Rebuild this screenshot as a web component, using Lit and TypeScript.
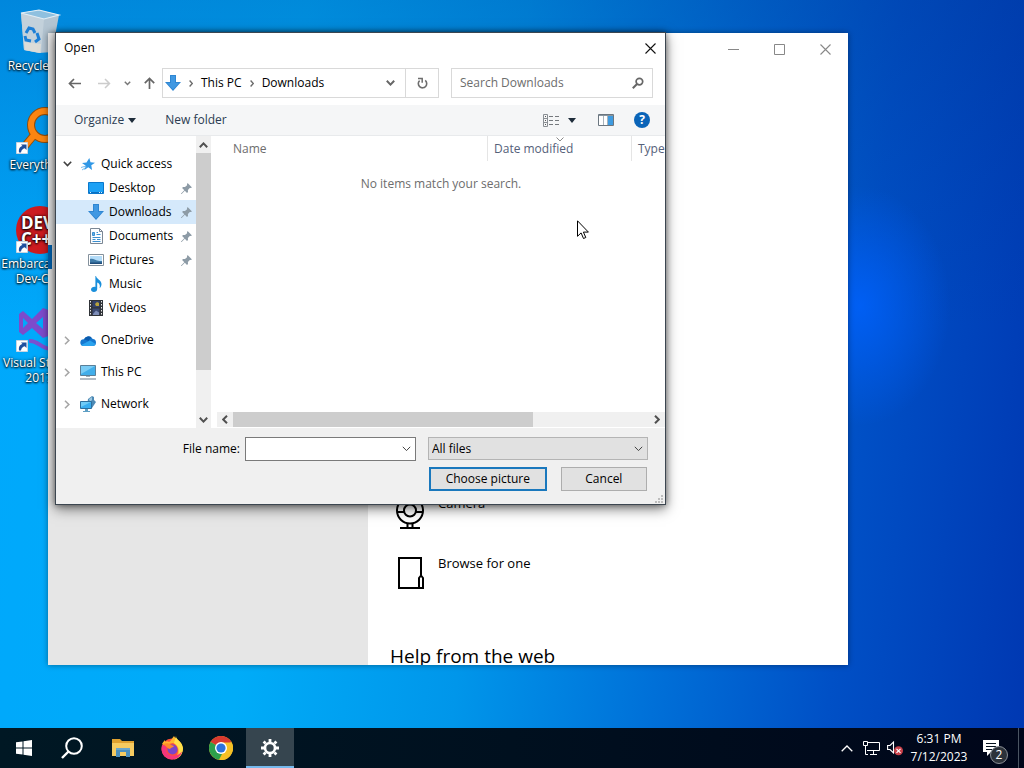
import { LitElement, html, svg, css, nothing, TemplateResult } from "lit";
import { customElement, property } from "lit/decorators.js";
import { classMap } from "lit/directives/class-map.js";

const icon = (w: number, h: number, body: TemplateResult, label = "") => html`<svg
  width=${w} height=${h} viewBox="0 0 ${w} ${h}" role=${label ? "img" : "presentation"}
  aria-label=${label || nothing} fill="none">${body}</svg>`;

/* ---- small glyphs ---- */
const chevDown = (c = "#555", s = 2) => icon(9, 6, svg`<path d="M.8 .8 4.5 4.6 8.2 .8" stroke=${c} stroke-width=${s}/>`);
const chevUp = () => icon(9, 6, svg`<path d="M.8 5.2 4.5 1.4 8.2 5.2" stroke="#505050" stroke-width="2"/>`);
const chevRight = (c = "#a6a6a6", s = 1.6) => icon(6, 9, svg`<path d="M1 .8 4.8 4.5 1 8.2" stroke=${c} stroke-width=${s}/>`);
const chevLeft = () => icon(6, 9, svg`<path d="M5 .8 1.2 4.5 5 8.2" stroke="#505050" stroke-width="2"/>`);
const crumb = () => icon(4, 7, svg`<path d="M.6 .6 3.3 3.5 .6 6.4" stroke="#6b6b6b" stroke-width="1.4"/>`);
const caret = () => icon(8, 5, svg`<path d="M0 0h8L4 5z" fill="#1e2c3a"/>`);
const closeX = (c: string) => icon(11, 11, svg`<path d="M.5 .5 10.5 10.5M10.5 .5 .5 10.5" stroke=${c} stroke-width="1.1"/>`);
const backArrow = (c: string) => icon(13, 11, svg`<path d="M13 5.5H1.6M6 1 1.5 5.5 6 10" stroke=${c} stroke-width="1.7"/>`);
const fwdArrow = (c: string) => icon(13, 11, svg`<path d="M0 5.5h11.4M7 1l4.5 4.5L7 10" stroke=${c} stroke-width="1.5"/>`);
const upArrow = () => icon(11, 12, svg`<path d="M5.5 12V1.6M.8 6.2 5.5 1.5l4.7 4.7" stroke="#666" stroke-width="1.7"/>`);
const refresh = () => icon(11, 12, svg`<path d="M8.2 3.4A4.200 4.200 0 1 1 2.600 3.600" stroke="#6d6d6d" stroke-width="1.600"/><path d="M1 1.500h4.200v4.200" stroke="#6d6d6d" stroke-width="1.500"/>`);
const magnify = () => icon(12, 12, svg`<circle cx="7.4" cy="4.6" r="3.3" stroke="#666" stroke-width="1.7"/><path d="M5 7 .8 11.2" stroke="#666" stroke-width="2"/>`);
const pin = () => icon(11, 11, svg`<path d="M6.6 0 11 4.4 9.6 5 8.8 4.9 6.9 7l.1 2-1 .9L3.800 7.700 .6 10.900 0 11 .1 10.400 3.300 7.200 1.100 5l.9-1 2 .1L6.100 2.200 6 1.300z" fill="#8d9ba6"/>`);
const details = () => icon(16, 13, svg`<path d="M.5 .5h4v12h-4zM.5 4.500h4M.5 8.500h4" stroke="#8a8f94"/><path d="M2 2.500h1M2 6.500h1M2 10.500h1" stroke="#555"/><path d="M6 2.500h4M12 2.500h4M6 6.500h4M12 6.500h4M6 10.500h4M12 10.500h4" stroke="#75797d"/>`);
const preview = () => icon(16, 12, svg`<path d="M.5 .5h15v11H.5z" fill="#fff" stroke="#6b7680"/><path d="M1 1h14v1H1z" fill="#8a969f"/><path d="M10 2h5v9h-5z" fill="#3f9be0"/><path d="M5.500 2v9M9.500 2v9" stroke="#a9b4bd"/>`);
const help = () => html`<span class="help">?</span>`;

/* ---- navigation tree icons ---- */
const star = () => icon(14, 13, svg`<path d="m8.300 0 1.200 4.200L14 4.700l-3.700 2.600L11 12 7.300 9.300 3.300 12l1.200-4.400L1 5l4.500-.5z" fill="#2f97e6"/><path d="M0 9.500 5 8M1 12l4.500-3" stroke="#77bdf0"/>`);
const desktopI = () => icon(16, 12, svg`<path d="M.5 .5h15v11H.5z" fill="#1da1f5" stroke="#0a78cc"/><path d="M1 10.500h14" stroke="#0b6fc0"/><path d="M2 10.500h1M11 10.500h1M13 10.500h1" stroke="#d9f0ff"/>`);
const download = () => icon(16, 16, svg`<path d="M5 0h6v7h5l-8 9-8-9h5z" fill="#2f86d2"/><path d="M6 1h4v7h4l-6 6.500L2 8h4z" fill="#4098e2"/>`);
const documentI = () => icon(13, 16, svg`<path d="M.5 .5h9l3 3v12H.5z" fill="#fbfdff" stroke="#7b8794"/><path d="M9.500 .5v3h3" stroke="#7b8794"/><path d="M6.500 4.500H8M6.500 6.500h4M2.500 9.500h8M2.500 11.500h3M7 11.500h3.500M2.500 13.500h8" stroke="#3a8fd0"/><path d="M2.500 7.500V4.500h2v3z" fill="#5fb0e8" stroke="#3a8fd0"/>`);
const pictureI = () => icon(16, 12, svg`<path d="M.5 .5h15v11H.5z" fill="#fff" stroke="#84919c"/><path d="M2 2h12v8H2z" fill="#b4dcf8"/><path d="M2 5c3-1 5 1 7 1.500s3 .5 5 .5v3H2z" fill="#3f7ba8"/><path d="M2 8.500h12V10H2z" fill="#1f4c7a"/>`);
const music = () => icon(11, 16, svg`<path d="M5 0c.4 3 5.500 4.200 5.500 8 0 2-.8 3.200-1.900 4.300.9-3.300-.3-5-2.400-5.800V13c0 1.700-1.400 3-3.300 3C1.200 16 0 15 0 13.600c0-1.700 2-3.100 4.400-2.700V0z" fill="#1a8fdb"/>`);
const video = () => icon(14, 16, svg`<path d="M0 0h14v16H0z" fill="#303338"/><path d="M1.500 1v15M12.500 1v15" stroke="#e6e6e6" stroke-dasharray="1.500 1.500"/><path d="M3.500 1h7v6.300h-7z" fill="#34416b"/><path d="M3.500 8.500h7V15h-7z" fill="#3c4a73"/><path d="m6 4 2-2 2 1v3H7z" fill="#b8a23a"/><path d="m4 14 3-3.500 3 2V15H4z" fill="#7d8db8"/>`);
const oneDrive = () => icon(16, 11, svg`<path d="M4 4.200A5 5 0 0 1 12.800 4 3.500 3.500 0 0 1 16 7.500 3.500 3.500 0 0 1 12.500 11H3.500A3.400 3.400 0 0 1 4 4.200z" fill="#1578d0"/><path d="M4 4.200A5 5 0 0 1 11.500 2.300L8.500 6z" fill="#0b5cae"/><path d="M1.200 10 10 5.500l5.600 3.600A3.500 3.500 0 0 1 12.500 11H3.500c-1 0-1.800-.4-2.300-1z" fill="#2aa3ee"/>`);
const pc = () => icon(16, 15, svg`<path d="M.5 .5h15v10H.5z" fill="#41aeea" stroke="#5a7f98"/><path d="M1 1h14L1 9z" fill="#7accf5"/><path d="M6 11h4v1H6z" fill="#9fb0bb"/><path d="M0 14h16" stroke="#9aa6b0" stroke-width="1.500"/>`);
const network = () => icon(16, 16, svg`<path d="m8 3 4-3 2 1v3l2 2-2 3-2 3-5-2z" fill="#4d89b4"/><path d="m9 3 3-2v3l-2 2z" fill="#9cc7e0"/><path d="M.5 5.500h11v7H.5z" fill="#39aef0" stroke="#2e6f9d"/><path d="M1 6h10L1 11z" fill="#6fcbf7"/><path d="M5 13h3v2H5zM3 15h7v1H3z" fill="#5e9fc4"/>`);

/* ---- settings page ---- */
const camera = () => icon(28, 34, svg`<circle cx="14" cy="14.500" r="13" stroke="#000" stroke-width="2"/><circle cx="14" cy="14.500" r="6" stroke="#000" stroke-width="2"/><path d="M1 16h7M20 16h7M4 32h20M11.500 27v5M16.500 27v5" stroke="#000" stroke-width="2"/>`);
const browse = () => icon(28, 34, svg`<path d="M25 19V2H3v30h20" stroke="#000" stroke-width="2"/><path d="M23 32V22l2-2.500 2 2.500v10z" stroke="#000" stroke-width="2"/>`);

/* ---- desktop ---- */
const shortcut = svg`<path d="M1.500 35.500h11v11h-11z" fill="#fff" stroke="#c8d4e0"/><path d="M4 45.500c-.5-4 1-6 3.500-6.500L6 37.500h5.500V43l-1.700-1.700C7.500 42 6.500 43 6 45.500z" fill="#1f4f9e"/>`;
const bin = () => icon(48, 48, svg`<path d="M6 5 24 2l20 5-7 37-13 1-15-3z" fill="#b4c5d2"/><path d="M6 5 24 2l20 5-15 4z" fill="#8fc0df"/><path d="m6 5 23 6-3 34-17-3z" fill="#c3d1db"/><path d="m6 5 23 6 15-4L24 2z" stroke="#e2eef6" stroke-width="1.200"/><path d="m9 34 17 2-.8 9L10 42z" fill="#dcdcd8"/><path d="m11 25 3-5 4 1 2 4M22 25l2 6-4 3M16 33l-5-1-1-4" stroke="#1c7fd6" stroke-width="3"/>`);
const everything = () => icon(48, 48, svg`<circle cx="30" cy="18" r="14" stroke="#8f4d0c" stroke-width="8"/><path d="M19 28 10 39" stroke="#8f4d0c" stroke-width="8"/><circle cx="30" cy="18" r="14" stroke="#fb8511" stroke-width="6"/><path d="M20 27 10 39" stroke="#fb8511" stroke-width="6"/>${shortcut}`);
const devcpp = () => icon(48, 48, svg`<circle cx="25" cy="24" r="24" fill="#cc1b20"/><text x="6" y="23" fill="#fff" font-family="Open Sans, sans-serif" font-weight="700" font-size="17">DEV</text><text x="6" y="39" fill="#fff" font-family="Open Sans, sans-serif" font-weight="700" font-size="17">C++</text>${shortcut}`);
const vs = () => icon(48, 48, svg`<path fill-rule="evenodd" d="m4 9 4-3 9 8L28 3l8 3v24l-8 3-11-10-9 7-4-3zm4 4v10l5-5zm20-1-7 6 7 6z" fill="#7d4bcb"/><path d="M14 36c9-1 12 8 22 8V3" stroke="#7b4fd0" stroke-width="4"/>${shortcut}`);

/* ---- taskbar ---- */
const windows = () => icon(16, 16, svg`<path d="M0 2.300 6.500 1.400v6.100H0zM7.500 1.200 16 0v7.500H7.500zM0 8.500h6.500v6.100L0 13.700zM7.500 8.500H16V16l-8.500-1.200z" fill="#fff"/>`);
const searchT = () => icon(22, 22, svg`<circle cx="13" cy="9" r="7.800" stroke="#fff" stroke-width="2"/><path d="M7.500 14.500 1 21" stroke="#fff" stroke-width="2.400"/>`);
const explorer = () => icon(22, 18, svg`<path d="M0 0h8l2 2h12v15H0z" fill="#dfa130"/><path d="M0 4h22v13H0z" fill="#f6cb60"/><path d="M4 9h14v9h-4v-5H8v5H4z" fill="#4b8fbd"/><path d="M4 9h14v2H4z" fill="#6aa6cc"/>`);
const firefox = () => icon(24, 24, svg`<circle cx="12" cy="13" r="10.500" fill="#ff4f3a"/><path d="M2 8c1-2 2-3 3-4v2c1-1 3-1 4 0 2-1 3-4 5-6 1 3 6 4 8 9 3 8-3 14-8 14.500C20 18 19 9 13 7L4 9z" fill="#ffb52e"/><path d="M16 0c0 4 6 5 7 12 0 5-3 9-6 10 4-6 2-12-3-15z" fill="#ffe14a"/><path d="M2 9c-2 7 2 14 10 14.500 6 0 9-4 10-8-4 5-12 6-15 1-1-2-1-4 0-6z" fill="#f5357c"/><circle cx="12.500" cy="13.500" r="5" fill="#7a45c9"/><path d="M3 8c3-1 6-1 8 1l3 1c-1 2-3 1-4 3-2 0-4-3-7-5z" fill="#ff8a2a"/>`);
const chrome = () => icon(24, 24, svg`<circle cx="12" cy="12" r="12" fill="#f5c026"/><path d="M12 12 1.600 6A12 12 0 0 1 22.400 6z" fill="#d8392f"/><path d="M1.600 6 12 12l1 6-3 5.800A12 12 0 0 1 1.600 6z" fill="#2da04b"/><path d="M12 6.500h10.700A12 12 0 0 1 10.500 23.900L17 14z" fill="#f5c026"/><circle cx="12" cy="12" r="6" fill="#fff"/><circle cx="12" cy="12" r="4.600" fill="#2b72dc"/>`);
const gear = () => icon(18, 18, svg`<circle cx="9" cy="9" r="5" stroke="#fff" stroke-width="2.600"/><g stroke="#fff" stroke-width="2.800"><path d="M9 0v3M9 15v3M0 9h3M15 9h3M2.600 2.600l2 2M13.400 13.400l2 2M15.400 2.600l-2 2M4.600 13.400l-2 2"/></g>`);
const trayUp = () => icon(12, 7, svg`<path d="M.7 6.300 6 1l5.300 5.300" stroke="#fff" stroke-width="1.300"/>`);
const trayNet = () => icon(17, 14, svg`<path d="M5 1.500h11.500v8H4M10.500 9.500v4M7 13.500h7" stroke="#fff"/><path d="M.5 .5h4v4h-4zM2.500 5v8.500H5" stroke="#fff"/>`);
const trayVol = () => icon(17, 16, svg`<path d="M.6 5.500H3L6.500 2v11L3 9.500H.6z" stroke="#fff" stroke-width="1.100"/><circle cx="11.500" cy="10.800" r="4.500" fill="#c9414a"/><path d="m9.500 8.800 4 4M13.500 8.800l-4 4" stroke="#fff" stroke-width="1.200"/>`);
const note = () => icon(16, 16, svg`<path d="M0 0h16v12H8l-4 4v-4H0z" fill="#fff"/><path d="M3 3.500h10M3 6.500h10M3 9.500h6" stroke="#06121f"/>`);

const FONT = css`
  :host { font-family: "Open Sans", "Noto Sans", sans-serif; font-size: 12px; line-height: 16px; color: #000; }
  *, *::before, *::after { box-sizing: border-box; }
  svg { display: block; flex: none; }
  button, input, select { font: inherit; color: inherit; margin: 0; }
  button { border: 0; background: none; padding: 0; display: flex; align-items: center; justify-content: center; }
  h1, h2, p, ul { margin: 0; padding: 0; font-size: inherit; font-weight: 400; list-style: none; }
`;

interface Place { name: string; glyph: () => TemplateResult; depth: number; pinned?: boolean; selected?: boolean; open?: boolean; }

const PLACES: Place[] = [
  { name: "Quick access", glyph: star, depth: 0, open: true },
  { name: "Desktop", glyph: desktopI, depth: 1, pinned: true },
  { name: "Downloads", glyph: download, depth: 1, pinned: true, selected: true },
  { name: "Documents", glyph: documentI, depth: 1, pinned: true },
  { name: "Pictures", glyph: pictureI, depth: 1, pinned: true },
  { name: "Music", glyph: music, depth: 1 },
  { name: "Videos", glyph: video, depth: 1 },
  { name: "OneDrive", glyph: oneDrive, depth: 0 },
  { name: "This PC", glyph: pc, depth: 0 },
  { name: "Network", glyph: network, depth: 0 },
];

@customElement("open-dialog")
class OpenDialog extends LitElement {
  @property() folder = "Downloads";

  static styles = [FONT, css`
    :host { display: block; background: #fff; border: 1px solid #3c4650; box-shadow: 0 4px 12px rgba(0,0,0,.5), 0 0 6px rgba(0,0,0,.4); }
    .title { display: flex; align-items: center; justify-content: space-between; height: 30px; padding: 0 9px 0 8px; }
    .nav { display: flex; align-items: center; height: 42px; padding: 0 12px 2px; }
    .nav .arrows { display: flex; align-items: center; width: 94px; gap: 17px; }
    .arrows .recent { margin: 0 -4px; }
    .address { flex: 1; display: flex; height: 30px; border: 1px solid #d9d9d9; align-items: center; }
    .crumbs { flex: 1; display: flex; align-items: center; gap: 8px; padding: 0 10px 0 2px; }
    .crumbs .drop { margin-left: auto; }
    .address .reload { width: 33px; height: 28px; border-left: 1px solid #d9d9d9; }
    .search { flex: 0 1 202px; height: 30px; margin-left: 12px; border: 1px solid #d9d9d9; display: flex; align-items: center; padding: 0 8px; }
    .search input { flex: 1; min-width: 0; border: 0; padding: 0; outline: 0; background: none; }
    .search input::placeholder { color: #6d6d6d; opacity: 1; }
    .tools { display: flex; align-items: center; height: 31px; padding: 0 15px 0 18px; background: #f5f6f7; border-bottom: 1px solid #e8eaec; color: #2b3c52; }
    .tools button { gap: 4px; }
    .tools .new { margin-left: 29px; }
    .tools .view { margin-left: auto; gap: 9px; }
    .tools .pane { margin: 0 20px 0 22px; }
    .help { width: 16px; height: 16px; border-radius: 50%; background: #0a64b8; color: #fff; font-weight: 700; line-height: 16px; text-align: center; }
    .body { display: flex; }
    .tree { width: 140px; padding: 16px 0 12px; }
    .tree a { display: flex; align-items: center; height: 24px; color: inherit; text-decoration: none; white-space: nowrap; padding-right: 4px; }
    .tree li.root + li.root, .tree li.child + li.root { margin-top: 8px; }
    .tree .sel { background: #d5e9fb; }
    .twist { width: 22px; display: flex; justify-content: center; }
    .pic { width: 20px; display: flex; justify-content: center; margin-right: 3px; }
    .child .twist { width: 30px; }
    .tree .pin { margin-left: auto; }
    .vbar { width: 15px; display: flex; flex-direction: column; background: #f0f0f0; }
    .vbar button { height: 17px; }
    .vbar .track { flex: 1; }
    .vbar .thumb { height: 84%; background: #cdcdcd; }
    .files { flex: 1; min-width: 0; margin-left: 6px; display: flex; flex-direction: column; overflow: hidden; }
    table { border-collapse: separate; border-spacing: 0; table-layout: fixed; width: 100%; }
    th { font-weight: 400; text-align: left; color: #55617a; height: 25px; padding: 0 0 0 6px; border-right: 1px solid #e5e5e5; white-space: nowrap; position: relative; }
    th:first-child { width: 271px; padding-left: 16px; color: #6d6d6d; }
    th:nth-child(2) { width: 144px; }
    th:last-child { border: 0; }
    .sort { position: absolute; left: 50%; margin-left: -4px; top: 1px; }
    .empty { text-align: center; color: #6d6d6d; padding-top: 15px; flex: 1; }
    .hbar { display: flex; align-items: stretch; height: 15px; margin-bottom: 1px; background: #f0f0f0; }
    .hbar button { width: 16px; }
    .hbar .track { flex: 1; }
    .hbar .thumb { width: 72%; height: 100%; background: #cdcdcd; }
    .foot { display: grid; grid-template-columns: 1fr 171px 220px; column-gap: 12px; row-gap: 6px; background: #f0f0f0; padding: 9px 17px 13px 0; position: relative; }
    .foot label { justify-self: end; align-self: center; margin-right: -7px; }
    .combo { display: flex; align-items: center; height: 24px; border: 1px solid #7a7a7a; background: #fff; }
    .combo input { flex: 1; min-width: 0; border: 0; outline: 0; padding: 0 3px; background: none; height: 100%; }
    .combo button { width: 17px; height: 100%; }
    .pick { display: grid; height: 24px; padding-bottom: 1px; }
    .pick > * { grid-area: 1 / 1; }
    .pick select { appearance: none; border: 1px solid #b4b4b4; border-radius: 0; background: #e1e1e1; padding: 0 3px; width: 100%; }
    .pick svg { justify-self: end; align-self: center; margin-right: 5px; pointer-events: none; }
    .actions { grid-column: 3; display: flex; gap: 14px; padding: 0 1px; }
    .actions button { flex: 43 1 0; height: 24px; background: #e1e1e1; border: 1px solid #adadad; white-space: nowrap; }
    .actions .primary { flex: 58 1 0; border: 2px solid #1a78bd; }
    .grip { position: absolute; right: 2px; bottom: 1px; }
  `];

  private place(p: Place) {
    const twist = p.depth ? nothing : p.open ? chevDown("#404040", 1.6) : chevRight();
    return html`<li class=${p.depth ? "child" : "root"}>
      <a href="#" class=${classMap({ sel: !!p.selected })}>
        <span class="twist">${twist}</span><span class="pic">${p.glyph()}</span>${p.name}
        ${p.pinned ? html`<span class="pin">${pin()}</span>` : nothing}
      </a></li>`;
  }

  render() {
    const dots = [[8, 0], [8, 3], [8, 6], [5, 3], [5, 6], [2, 6]];
    return html`
      <div class="title"><h1>Open</h1><button aria-label="Close">${closeX("#111")}</button></div>
      <div class="nav">
        <div class="arrows">
          <button aria-label="Back">${backArrow("#666")}</button>
          <button aria-label="Forward">${fwdArrow("#ccc")}</button>
          <button class="recent" aria-label="Recent locations">${icon(7, 5, svg`<path d="M.8 .8 3.500 3.500 6.200 .8" stroke="#777" stroke-width="1.500"/>`)}</button>
          <button aria-label="Up">${upArrow()}</button>
        </div>
        <div class="address">
          <div class="crumbs">${download()}${crumb()}<span>This PC</span>${crumb()}<span>${this.folder}</span>
            <button class="drop" aria-label="Previous locations">${chevDown("#666")}</button></div>
          <button class="reload" aria-label="Refresh">${refresh()}</button>
        </div>
        <div class="search"><input type="search" aria-label="Search" placeholder="Search ${this.folder}">${magnify()}</div>
      </div>
      <div class="tools">
        <button>Organize ${caret()}</button>
        <button class="new">New folder</button>
        <button class="view" aria-label="Change your view">${details()}${caret()}</button>
        <button class="pane" aria-label="Preview pane">${preview()}</button>
        <button aria-label="Help">${help()}</button>
      </div>
      <div class="body">
        <ul class="tree">${PLACES.map((p) => this.place(p))}</ul>
        <div class="vbar">
          <button aria-label="Scroll up">${chevUp()}</button>
          <div class="track"><div class="thumb"></div></div>
          <button aria-label="Scroll down">${chevDown("#505050")}</button>
        </div>
        <div class="files">
          <table><thead><tr><th>Name</th>
            <th><span class="sort">${icon(8, 5, svg`<path d="M.5 .5 4 4 7.500 .5" stroke="#8a8a8a"/>`)}</span>Date modified</th>
            <th>Type</th></tr></thead></table>
          <p class="empty">No items match your search.</p>
          <div class="hbar">
            <button aria-label="Scroll left">${chevLeft()}</button>
            <div class="track"><div class="thumb"></div></div>
            <button aria-label="Scroll right">${chevRight("#505050", 2)}</button>
          </div>
        </div>
      </div>
      <div class="foot">
        <label for="file">File name:</label>
        <div class="combo"><input id="file" type="text"><button aria-label="Recent files">${chevDown("#444", 1)}</button></div>
        <div class="pick"><select aria-label="File type"><option>All files</option></select>${chevDown("#444", 1)}</div>
        <div class="actions"><button class="primary">Choose picture</button><button>Cancel</button></div>
        <span class="grip">${icon(10, 8, svg`${dots.map(([x, y]) => svg`<rect x=${x} y=${y} width="2" height="2" fill="#bdbdbd"/>`)}`)}</span>
      </div>`;
  }
}

@customElement("settings-window")
class SettingsWindow extends LitElement {
  static styles = [FONT, css`
    :host { display: flex; background: #fff; overflow: hidden; box-shadow: 0 0 6px rgba(0,0,0,.4); }
    .side { flex: 0 0 40%; background: #e6e6e6; padding-top: 212px; }
    .mark { width: 4px; height: 24px; background: #0063b1; }
    .main { flex: 1; display: flex; flex-direction: column; }
    .caption { display: flex; justify-content: flex-end; height: 32px; }
    .caption button { width: 46px; }
    .page { flex: 1; display: flex; flex-direction: column; justify-content: flex-end; padding-left: 22px; }
    .opt { display: flex; align-items: flex-start; gap: 14px; height: 60px; padding-left: 6px; font-size: 13px; line-height: 18px; justify-content: flex-start; }
    .opt svg { margin-top: 2px; }
    h2 { font-size: 19px; line-height: 24px; margin-top: 30px; height: 21px; }
  `];
  render() {
    return html`
      <div class="side"><div class="mark"></div></div>
      <div class="main">
        <div class="caption">
          <button aria-label="Minimize">${icon(11, 11, svg`<path d="M0 5.500h11" stroke="#888"/>`)}</button>
          <button aria-label="Maximize">${icon(11, 11, svg`<path d="M.5 .5h10v10H.5z" stroke="#888"/>`)}</button>
          <button aria-label="Close">${closeX("#888")}</button>
        </div>
        <div class="page">
          <button class="opt">${camera()}<span>Camera</span></button>
          <button class="opt">${browse()}<span>Browse for one</span></button>
          <h2>Help from the web</h2>
        </div>
      </div>`;
  }
}

@customElement("app-root")
class AppRoot extends LitElement {
  static styles = [FONT, css`
    :host { display: flex; flex-direction: column; height: 100vh; overflow: hidden; position: relative; }
    .desk { flex: 1; position: relative; min-height: 0; background:
      radial-gradient(ellipse 90px 120px at 84% 42%, rgba(0,98,255,.8), rgba(0,98,255,0)),
      linear-gradient(180deg, rgba(0,50,140,.28), rgba(0,80,180,0) 45%),
      linear-gradient(96deg, #00a8fc 0%, #00acf8 28%, #0096ea 48%, #0070d8 66%, #0050c6 82%, #0038b2 100%); }
    .shortcuts { display: grid; grid-auto-rows: 99px; width: 78px; }
    .shortcuts a { display: flex; flex-direction: column; align-items: center; padding-top: 8px; color: #fff; text-decoration: none; line-height: 15px; text-align: center; text-shadow: 0 1px 2px #000, 0 0 3px #000; }
    .shortcuts span { margin-top: 2px; }
    settings-window { position: absolute; left: 48px; top: 33px; bottom: 63px; width: min(800px, 90vw); }
    open-dialog { position: absolute; left: 55px; top: 32px; width: min(611px, 90vw); }
    .cursor { position: absolute; left: 577px; top: 220px; }
    .bar { height: 40px; display: flex; background: linear-gradient(90deg, #001824, #00101f 50%, #00061a); color: #fff; }
    .bar button { width: 48px; height: 100%; }
    .start { display: flex; }
    .apps { display: flex; gap: 1px; margin-left: 3px; }
    .apps .on { background: #36454f; border-bottom: 2px solid #76b9ed; padding-top: 2px; }
    .tray { margin-left: auto; display: flex; align-items: center; padding-right: 5px; }
    .tray button { width: 24px; }
    .clock { text-align: center; line-height: 18px; width: 64px; }
    .tray .center { width: 48px; position: relative; border-right: 1px solid #4a5462; justify-content: flex-start; padding-left: 12px; }
    .count { position: absolute; left: 19px; top: 18px; width: 18px; height: 18px; border-radius: 50%; background: #2c323a; border: 1px solid #8a8f96; line-height: 16px; text-align: center; }
  `];
  render() {
    const shortcuts: [string, () => TemplateResult][] = [
      ["Recycle Bin", bin], ["Everything", everything], ["Embarcadero Dev-C++", devcpp], ["Visual Studio 2017", vs],
    ];
    return html`
      <main class="desk">
        <nav class="shortcuts">${shortcuts.map(([n, g]) => html`<a href="#">${g()}<span>${n}</span></a>`)}</nav>
        <settings-window></settings-window>
        <open-dialog></open-dialog>
        <span class="cursor">${icon(13, 20, svg`<path d="M.5 .8v15.500l3.600-3.400 2.400 5.600 2.300-1-2.400-5.400h5z" fill="#fff" stroke="#000"/>`)}</span>
      </main>
      <footer class="bar">
        <div class="start">
          <button aria-label="Start">${windows()}</button>
          <button aria-label="Search">${searchT()}</button>
        </div>
        <div class="apps">
          <button aria-label="File Explorer">${explorer()}</button>
          <button aria-label="Firefox">${firefox()}</button>
          <button aria-label="Chrome">${chrome()}</button>
          <button class="on" aria-label="Settings">${gear()}</button>
        </div>
        <div class="tray">
          <button aria-label="Hidden icons">${trayUp()}</button>
          <button aria-label="Network">${trayNet()}</button>
          <button aria-label="Volume">${trayVol()}</button>
          <time class="clock">6:31 PM<br>7/12/2023</time>
          <button class="center" aria-label="Notifications">${note()}<span class="count">2</span></button>
        </div>
      </footer>`;
  }
}
